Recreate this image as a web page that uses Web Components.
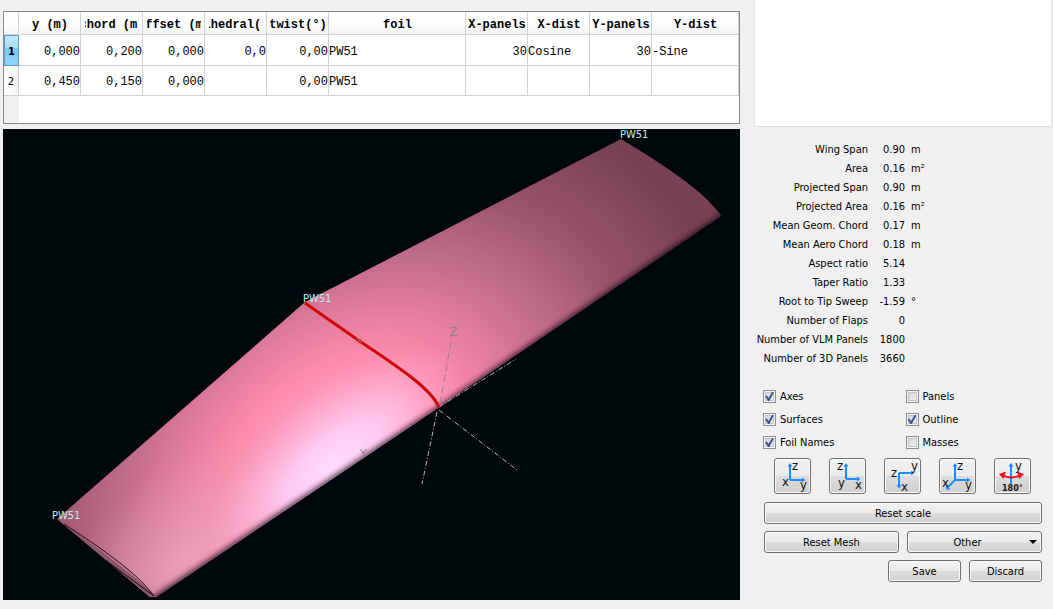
<!DOCTYPE html>
<html lang="en">
<head>
<meta charset="utf-8">
<title>Wing Edition</title>
<style>
html,body{margin:0;background:#f0f0f0;color:#000;font:11px/19px "DejaVu Sans Condensed","Noto Sans",sans-serif}
</style>
</head>
<body>
<wing-dialog></wing-dialog>
<script>
const define = (name, html) => customElements.define(name, class extends HTMLElement {
  connectedCallback() {
    if (this.shadowRoot) return;
    const t = document.createElement('template');
    t.innerHTML = typeof html === 'function' ? html(this) : html;
    this.attachShadow({mode: 'open'}).append(t.content.cloneNode(true));
  }
});

const BUTTON_CSS = `
button{box-sizing:border-box;width:100%;border:1px solid #707070;border-radius:3px;margin:0;padding:0;color:#000;font:inherit;
background:linear-gradient(#f2f2f2,#ebebeb 49%,#dddddd 51%,#cfcfcf);box-shadow:inset 0 0 0 1px #fafafa}
button:hover{border-color:#3c7fb1}`;

define('push-button', el => `
<style>:host{display:block}${BUTTON_CSS}
button{height:22px;position:relative}
i{position:absolute;right:4px;top:8px;width:0;height:0;border:4px solid transparent;border-top-color:#000;border-bottom:0}
:host([menu]) button{padding-right:14px}
</style>
<button type="button"${el.hasAttribute('menu') ? ' aria-haspopup="menu"' : ''}><span><slot></slot></span>${el.hasAttribute('menu') ? '<i></i>' : ''}</button>`);

const AXES = {
  front: '<path class="a" d="M15 21V6M15 21H28"/><path class="h" d="M12.5 7.500 15 4l2.500 3.500zM27 18.500 30.500 21 27 23.500z"/><text x="17" y="11">z</text><text x="7" y="27">x</text><text x="25" y="30">y</text>',
  side: '<path class="a" d="M16 20V6M16 20H28"/><path class="h" d="M13.500 7.500 16 4l2.500 3.500zM27 17.500 30.500 20 27 22.500z"/><text x="7" y="11">z</text><text x="8" y="28">y</text><text x="25" y="30">x</text>',
  top: '<path class="a" d="M14 14V27M14 14H27"/><path class="h" d="M11.500 26 14 29.500 16.500 26zM26 11.500 29.500 14 26 16.500z"/><text x="6" y="18">z</text><text x="26" y="11">y</text><text x="16" y="32">x</text>',
  iso: '<path class="a" d="M15 21V6M15 21H28M15 21L7 29"/><path class="h" d="M12.500 7.500 15 4l2.500 3.500zM27 18.500 30.500 21 27 23.500zM6 26v4.500h4.500z"/><text x="17" y="11">z</text><text x="2" y="28">x</text><text x="25" y="30">y</text>',
  flip: '<path class="a" d="M16 25V6"/><path class="h" d="M13.500 7.500 16 4l2.500 3.500z"/><path d="M7 16Q16 21 26 16" fill="none" stroke="#e8141c" stroke-width="2"/><path d="M4 15 11 12.500 8.500 20zM29 15 22 12.500 24.500 20z" fill="#e8141c"/><text x="20" y="11">y</text><text x="7" y="32" class="d">180°</text>'
};
define('view-button', el => `
<style>:host{display:block}${BUTTON_CSS}
button{width:37px;height:36px;display:block}
svg{display:block}
.a{fill:none;stroke:#1e8cff;stroke-width:2}
.h{fill:#1e8cff}
text{font:13px "DejaVu Sans Condensed","Noto Sans",sans-serif;fill:#111}
.d{font:bold 8px "DejaVu Sans",sans-serif}
</style>
<button type="button" aria-label="${el.getAttribute('label')}"><svg width="35" height="34" viewBox="0 0 35 34">${AXES[el.getAttribute('view')]}</svg></button>`);

define('check-option', el => `
<style>:host{display:block}
label{display:flex;align-items:center;gap:4px;height:23px}
input{appearance:none;box-sizing:border-box;width:13px;height:13px;margin:0;border:1px solid #8e8f8f;
background:linear-gradient(135deg,#cbcfd5,#f6f6f6);box-shadow:inset 0 0 0 1px #f4f4f4,inset 0 0 0 2px #c3c7cc;display:grid;place-items:center}
input:checked::before{content:"";width:9px;height:9px;background:#3c5494;clip-path:polygon(0 48%,20% 38%,40% 66%,78% 0,100% 4%,48% 100%,34% 100%)}
</style>
<label><input type="checkbox"${el.hasAttribute('checked') ? ' checked' : ''}><span><slot></slot></span></label>`);

define('section-table', () => {
  const heads = ['y (m)','chord (m)','offset (m)','dihedral(°)','twist(°)','foil','X-panels','X-dist','Y-panels','Y-dist'];
  const rows = [['0,000','0,200','0,000','0,0','0,00','PW51','30','Cosine','30','-Sine'],['0,450','0,150','0,000','','0,00','PW51','','','','']];
  const left = [5,7,9];
  return `
<style>
:host{display:block;box-sizing:border-box;min-height:113px;border:1px solid #828790;
background:linear-gradient(90deg,#f0f0f0 15px,#fff 15px);font:12px/16px "Liberation Mono",monospace}
table{border-collapse:separate;border-spacing:0;table-layout:fixed;width:100%}
col.n{width:15px}col.c{width:62px}col.w{width:87px}
th,td{box-sizing:border-box;padding:0;border-right:1px solid #d0d3d6;border-bottom:1px solid #d0d3d6;background:#fff;overflow:hidden;white-space:nowrap}
thead th{height:23px;background:linear-gradient(#fff 40%,#f2f4f6)}
thead th div{display:flex;justify-content:center;overflow:hidden;margin:0 1px 0 2px;padding-top:3px}
thead th:nth-child(3) div,thead th:nth-child(4) div,thead th:nth-child(5) div{margin:0 3px 0 4px}
td{height:30px;text-align:right;padding-top:2px}
tbody tr:first-child>*{height:31px}
tbody tr:first-child>td{padding-top:3px}
td.l{text-align:left}
tbody th{font:11px/16px "DejaVu Sans Condensed",sans-serif;padding-top:2px;background:linear-gradient(90deg,#fff,#f2f4f6);text-align:center}
tbody tr:first-child th{font-weight:bold;background:linear-gradient(#c4e6f8,#a5dbf6 40%,#78c8f2 42%,#8fd4f8);border:1px solid #5a9cc4}
</style>
<table><colgroup><col class="n">${'<col class="c">'.repeat(5)}<col>${'<col class="c">'.repeat(3)}<col class="w"></colgroup>
<thead><tr><th></th>${heads.map(h => `<th scope="col"><div><span>${h}</span></div></th>`).join('')}</tr></thead>
<tbody>${rows.map((r, i) => `<tr><th scope="row">${i + 1}</th>${r.map((c, j) => `<td${left.includes(j) ? ' class="l"' : ''}>${c}</td>`).join('')}</tr>`).join('')}</tbody></table>`;
});

define('wing-view', `
<style>
:host{display:flex;background:#00080c;min-height:0}
svg{width:100%;flex:1;display:block}
.n{font:11px "DejaVu Sans Condensed","Noto Sans",sans-serif;fill:#c0f0f0}
.x{font:12px "DejaVu Sans Condensed","Noto Sans",sans-serif;fill:#908088}
</style>
<svg viewBox="3 129 737 471" role="img" aria-label="3D view of the wing">
<defs>
<clipPath id="wing"><path d="M305 302 621 139Q694 183 713 206 720 213 721 216L438 408 156 597 150 597 57 519Z"/></clipPath>
<radialGradient id="skin" gradientUnits="userSpaceOnUse" cx="0" cy="0" r="1" gradientTransform="translate(338 460) rotate(-38) scale(420 300)">
<stop offset="0" stop-color="#ffb0d4"/><stop offset=".18" stop-color="#ff9fc2"/><stop offset=".29" stop-color="#ff8cae"/><stop offset=".43" stop-color="#e47c9e"/><stop offset=".6" stop-color="#bd6a88"/><stop offset=".78" stop-color="#985369"/><stop offset="1" stop-color="#784254"/></radialGradient>
<radialGradient id="glow" gradientUnits="userSpaceOnUse" cx="0" cy="0" r="1" gradientTransform="translate(332 466) rotate(-41) scale(165 72)">
<stop offset="0" stop-color="#ffdcff"/><stop offset=".35" stop-color="#ffd0f8" stop-opacity=".85"/><stop offset=".7" stop-color="#ffbce0" stop-opacity=".35"/><stop offset="1" stop-color="#ffa8cc" stop-opacity="0"/></radialGradient>
<radialGradient id="port" gradientUnits="userSpaceOnUse" cx="0" cy="0" r="1" gradientTransform="translate(185 560) rotate(-40) scale(170 90)"><stop offset="0" stop-color="#f0b0c8" stop-opacity=".7"/><stop offset="1" stop-color="#e0a0b8" stop-opacity="0"/></radialGradient>
<filter id="soft" x="-10%" y="-10%" width="120%" height="120%"><feGaussianBlur stdDeviation="3"/></filter>
</defs>
<g clip-path="url(#wing)">
<path fill="url(#skin)" d="M50 130H730V600H50z"/>
<path fill="url(#port)" d="M50 400H400V600H50z"/>
<path fill="url(#glow)" d="M50 130H730V600H50z"/>
<path d="M725 216 440 410 154 601" fill="none" stroke="#200c14" stroke-width="7" filter="url(#soft)"/>
<path d="M57 519 150 597H156Q135 574 57 519" fill="#8a5868"/>
</g>
<path d="M64 524Q136 570 154 596L100 556" fill="none" stroke="#200810"/>
<path d="M439 407 516 359M439 410 517 470M437 412 422 484" fill="none" stroke="#b8b8b8" stroke-dasharray="5 2 1 2"/>
<path d="M440 404 454 325" fill="none" stroke="#a0808c" stroke-dasharray="8 3"/>
<path d="M305 303 358 340C392 363 433 389 439 408" fill="none" stroke="#d00808" stroke-width="3"/>
<path d="M357 338l5 5m0-5-5 5" stroke="#a08070"/>
<text class="x" x="450" y="336">Z</text><text class="x" x="360" y="458">Y</text>
<text class="n" x="620" y="138">PW51</text><text class="n" x="303" y="302">PW51</text><text class="n" x="52" y="519">PW51</text>
</svg>`);

define('wing-stats', () => `
<style>
:host{display:block}
dl{margin:0;display:grid;grid-template-columns:114px 31px 1fr;column-gap:6px;line-height:19px}
dt,dd{margin:0;white-space:nowrap;text-align:right}
dd+dd{text-align:left}
</style>
<dl>${[['Wing Span','0.90','m'],['Area','0.16','m²'],['Projected Span','0.90','m'],['Projected Area','0.16','m²'],['Mean Geom. Chord','0.17','m'],['Mean Aero Chord','0.18','m'],['Aspect ratio','5.14',''],['Taper Ratio','1.33',''],['Root to Tip Sweep','-1.59','°'],['Number of Flaps','0',''],['Number of VLM Panels','1800',''],['Number of 3D Panels','3660','']].map(r => `<dt>${r[0]}</dt><dd>${r[1]}</dd><dd>${r[2]}</dd>`).join('')}</dl>`);

define('wing-dialog', `
<style>
:host{box-sizing:border-box;min-height:100vh;display:grid;grid-template-columns:minmax(0,1fr) 298px;column-gap:14px;padding:0 1px 0 3px}
main{display:flex;flex-direction:column;gap:5px;padding:11px 0 9px;min-width:0}
wing-view{flex:1}
.notes{display:block;box-sizing:border-box;width:100%;height:127px;margin:0;padding:4px;resize:none;border:1px solid #dfe1e4;border-top:0;background:#fff;font:inherit;outline:0}
wing-stats{margin-top:13px}
.checks{display:grid;grid-template-columns:1fr 1fr;column-gap:8px;margin:17px 12px 0 9px}
.views{display:flex;gap:18px;margin:4px 0 8px 20px}
.actions{display:grid;gap:7px;margin:0 10px}
.pair{display:grid;grid-template-columns:1fr 1fr;gap:8px}
.end{display:grid;grid-template-columns:73px 73px;justify-content:end;gap:8px}
</style>
<main><section-table></section-table><wing-view></wing-view></main>
<aside>
<textarea class="notes" aria-label="Description"></textarea>
<wing-stats></wing-stats>
<div class="checks">
<check-option checked>Axes</check-option><check-option>Panels</check-option>
<check-option checked>Surfaces</check-option><check-option checked>Outline</check-option>
<check-option checked>Foil Names</check-option><check-option>Masses</check-option>
</div>
<div class="views"><view-button view="front" label="Front view"></view-button><view-button view="side" label="Side view"></view-button><view-button view="top" label="Top view"></view-button><view-button view="iso" label="Isometric view"></view-button><view-button view="flip" label="Flip view"></view-button></div>
<div class="actions">
<push-button>Reset scale</push-button>
<div class="pair"><push-button>Reset Mesh</push-button><push-button menu>Other</push-button></div>
<div class="end"><push-button>Save</push-button><push-button>Discard</push-button></div>
</div>
</aside>`);
</script>
</body>
</html>
